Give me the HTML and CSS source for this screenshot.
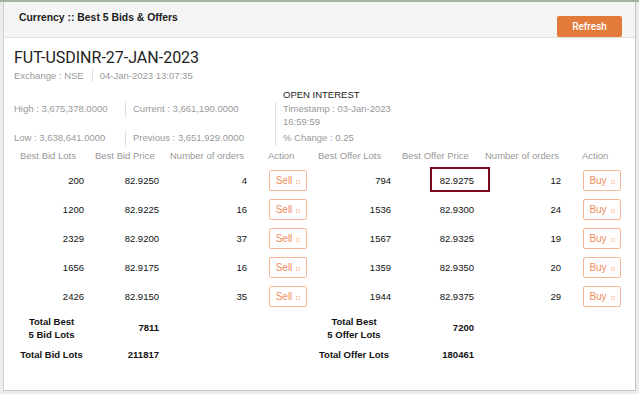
FILE: index.html
```html
<!DOCTYPE html>
<html lang="en">
<head>
    <meta charset="UTF-8" />
    <title>Best 5 Bids &amp; Offers</title>
    <link rel="stylesheet" href="styles.css">
</head>
<body>
<div class="topline"></div>

<div class="panel">
    <div class="panel-head">
        <div class="panel-title">Currency :: Best 5 Bids &amp; Offers</div>
        <button class="btn-refresh">Refresh</button>
    </div>

    <div class="panel-body">
        <h1 class="symbol">FUT-USDINR-27-JAN-2023</h1>
        <div class="meta">
            <span class="meta-item">Exchange : NSE</span>
            <span class="meta-item sep">04-Jan-2023 13:07:35</span>
        </div>

        <div class="stats">
            <div class="oi-title">OPEN INTEREST</div>
            <div class="stat">High : 3,675,378.0000</div>
            <div class="stat sep">Current : 3,661,190.0000</div>
            <div class="stat sep">Timestamp : 03-Jan-2023<br>16:59:59</div>
            <div class="stat">Low : 3,638,641.0000</div>
            <div class="stat sep">Previous : 3,651,929.0000</div>
            <div class="stat sep">% Change : 0.25</div>
        </div>

        <table class="depth">
            <colgroup>
                <col style="width:75px">
                <col style="width:75px">
                <col style="width:88px">
                <col style="width:60px">
                <col style="width:84px">
                <col style="width:83px">
                <col style="width:87px">
                <col style="width:59px">
            </colgroup>
            <thead>
                <tr>
                    <th>Best Bid Lots</th>
                    <th>Best Bid Price</th>
                    <th>Number of orders</th>
                    <th class="act">Action</th>
                    <th>Best Offer Lots</th>
                    <th>Best Offer Price</th>
                    <th>Number of orders</th>
                    <th class="act">Action</th>
                </tr>
            </thead>
            <tbody id="depthRows"></tbody>
            <tfoot>
                <tr class="total-best">
                    <td class="tot-label">Total Best<br>5 Bid Lots</td>
                    <td class="tot-value">7811</td>
                    <td></td>
                    <td></td>
                    <td class="tot-label">Total Best<br>5 Offer Lots</td>
                    <td class="tot-value">7200</td>
                    <td></td>
                    <td></td>
                </tr>
                <tr class="total-all">
                    <td class="tot-label">Total Bid Lots</td>
                    <td class="tot-value">211817</td>
                    <td></td>
                    <td></td>
                    <td class="tot-label">Total Offer Lots</td>
                    <td class="tot-value">180461</td>
                    <td></td>
                    <td></td>
                </tr>
            </tfoot>
        </table>
    </div>
</div>

<script>
    const rows = [
        { bidLots: 200,  bidPrice: '82.9250', bidOrders: 4,  offerLots: 794,  offerPrice: '82.9275', offerOrders: 12, best: true },
        { bidLots: 1200, bidPrice: '82.9225', bidOrders: 16, offerLots: 1536, offerPrice: '82.9300', offerOrders: 24 },
        { bidLots: 2329, bidPrice: '82.9200', bidOrders: 37, offerLots: 1567, offerPrice: '82.9325', offerOrders: 19 },
        { bidLots: 1656, bidPrice: '82.9175', bidOrders: 16, offerLots: 1359, offerPrice: '82.9350', offerOrders: 20 },
        { bidLots: 2426, bidPrice: '82.9150', bidOrders: 35, offerLots: 1944, offerPrice: '82.9375', offerOrders: 29 }
    ];

    const body = document.getElementById('depthRows');

    rows.forEach(r => {
        const tr = document.createElement('tr');
        tr.innerHTML = `
            <td>${r.bidLots}</td>
            <td>${r.bidPrice}</td>
            <td>${r.bidOrders}</td>
            <td class="act"><button class="btn-trade">Sell<span class="ico"></span></button></td>
            <td>${r.offerLots}</td>
            <td class="${r.best ? 'best' : ''}">${r.best ? '<span class="best-box"></span>' : ''}${r.offerPrice}</td>
            <td>${r.offerOrders}</td>
            <td class="act"><button class="btn-trade">Buy<span class="ico"></span></button></td>
        `;
        body.appendChild(tr);
    });
</script>
</body>
</html>
```

FILE: styles.css
```css
html, body {
    height: 100%;
}

body {
    margin: 0;
    font-family: "Liberation Sans", Arial, sans-serif;
    font-size: 9.5px;
    color: #222;
    background: #ececec;
    overflow: hidden;
}

.topline {
    height: 2px;
    background: #a4b3a1;
}

.panel {
    margin: 0 3px 0 3px;
    height: 389px;
    box-sizing: border-box;
    background: white;
    border-left: 1px solid #cfcfcf;
    border-right: 1px solid #c4c4c4;
    border-bottom: 1px solid #c4c4c4;
}

.panel-head {
    display: flex;
    justify-content: space-between;
    align-items: flex-start;
    height: 36px;
    box-sizing: border-box;
    padding: 0 13px 0 15px;
    background: #f5f5f5;
    border-bottom: 1px solid #e2e2e2;
}

.panel-title {
    padding-top: 10px;
    font-size: 10.4px;
    font-weight: bold;
    color: #1c1c1c;
}

.btn-refresh {
    margin-top: 14px;
    width: 65px;
    height: 21px;
    border: none;
    border-radius: 2px;
    background: #e27a3a;
    color: white;
    font-family: Roboto, sans-serif;
    font-size: 10px;
    font-weight: 500;
    padding: 0;
}

.panel-body {
    padding: 0 0 0 10px;
}

.symbol {
    margin: 0;
    padding-top: 10px;
    font-family: Roboto, sans-serif;
    font-size: 16px;
    font-weight: normal;
    line-height: 20px;
    color: #222;
}

.meta {
    display: flex;
    line-height: 13px;
    margin-top: 1px;
    color: #999;
}

.meta-item {
    padding-right: 8px;
}

.meta-item.sep {
    border-left: 1px solid #ddd;
    padding-left: 7px;
}

.stats {
    display: grid;
    grid-template-columns: 111px 150px 1fr;
    grid-template-rows: 14px 29px 13px;
    margin-top: 6px;
    line-height: 13px;
    color: #999;
}

.oi-title {
    grid-column: 3;
    padding-left: 8px;
    color: #222;
}

.stat {
    align-self: start;
}

.stat.sep {
    border-left: 1px solid #ddd;
    padding-left: 7px;
    padding-bottom: 2px;
}

/* depth table */
.depth {
    margin-top: 1px;
    width: 611px;
    table-layout: fixed;
    border-collapse: collapse;
}

.depth th,
.depth td {
    padding: 0;
    white-space: nowrap;
}

.depth th {
    height: 21px;
    text-align: left;
    padding-left: 6px;
    font-weight: normal;
    color: #999;
}

.depth th.act {
    padding-left: 16px;
}

.depth tbody td {
    height: 29px;
    text-align: right;
    padding-right: 5px;
    color: #111;
}

.depth tbody td.act {
    text-align: left;
    padding: 0 0 0 17px;
}

.btn-trade {
    display: inline-flex;
    align-items: center;
    justify-content: center;
    gap: 4px;
    width: 38px;
    height: 21px;
    padding: 0;
    vertical-align: middle;
    background: white;
    border: 1px solid #f4b894;
    border-radius: 2px;
    color: #f08d5c;
    font-family: "Liberation Sans", Arial, sans-serif;
    font-size: 10px;
}

.btn-trade .ico {
    width: 2px;
    height: 2px;
    margin-top: 3px;
    border: 1px solid #f9d6c2;
}

.depth td.best {
    position: relative;
}

.best-box {
    position: absolute;
    left: 34px;
    top: 1px;
    width: 60px;
    height: 25px;
    box-sizing: border-box;
    border: 2px solid #7b0a1e;
}

.depth tfoot td {
    font-weight: bold;
    color: #111;
}

.total-best td {
    height: 33px;
}

.total-all td {
    height: 21px;
}

.tot-label {
    text-align: center;
    line-height: 13px;
}

.tot-value {
    text-align: right;
    padding-right: 5px !important;
}
```
